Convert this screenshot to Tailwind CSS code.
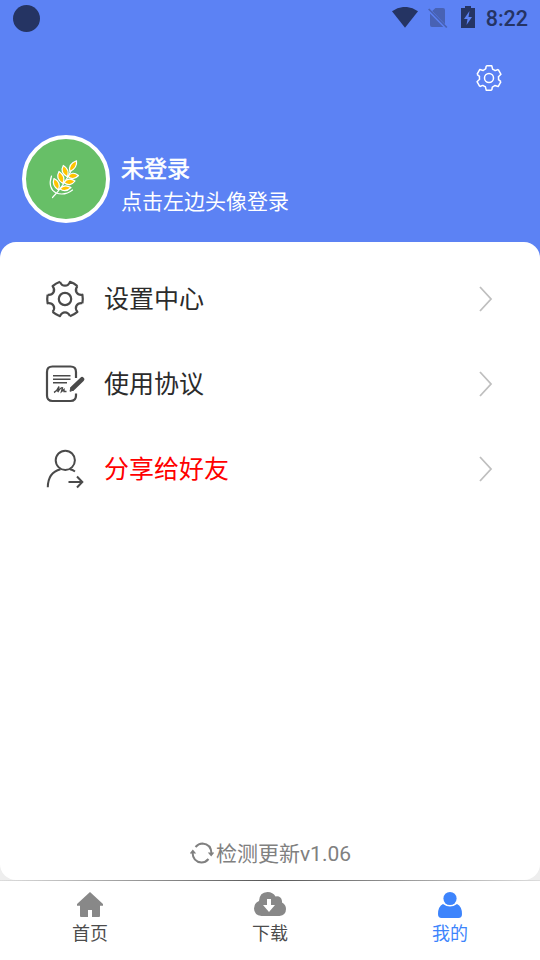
<!DOCTYPE html>
<html lang="zh-CN">
<head>
  <meta charset="UTF-8"/>
  <meta name="viewport" content="width=device-width, initial-scale=1.0"/>
  <title>我的</title>
  <script src="https://cdn.jsdelivr.net/npm/@tailwindcss/browser@4"></script>
</head>
<body class="bg-white font-['Roboto','Noto_Sans_CJK_SC',sans-serif]">
  <div class="w-[540px] h-[960px] flex flex-col overflow-hidden">
    <header class="h-[242px] shrink-0 bg-[#5c82f4] flex flex-col">
      <!-- Status bar -->
      <div class="h-9 flex items-center justify-between pl-[13px] pr-3">
        <div class="size-[27px] rounded-full bg-[#253463]"></div>
        <div class="flex items-center text-[#253463]">
          <svg class="w-[26px] h-[21px] mr-[10px] mb-0.5" viewBox="0 0 26 21" fill="currentColor"><path d="M0 4.3Q13-4.5 26 4.3L13 20.7z"/></svg>
          <svg class="w-5 h-[21px] mr-[13px]" viewBox="0 0 20 21"><path d="M7.5 0H15q2 0 2 2v14.2L4.2 3zM2 5.5 15.3 19H4q-2 0-2-2z" fill="#4862b4"/><path d="M.7 1 18.8 19.5" stroke="#4862b4" stroke-width="1.7"/></svg>
          <svg class="w-[14px] h-[22px] mr-[11px] mb-0.5" viewBox="0 0 14 22"><path d="M4 0h6v2h4v20H0V2h4z" fill="currentColor"/><path d="M8.5 5 3 13h3.5l-1 6L11 11H7.5z" fill="#5c82f4"/></svg>
          <span class="text-[21.5px] leading-9 pt-0.5 font-medium">8:22</span>
        </div>
      </div>
      <div class="h-[84px] flex justify-end items-center pr-[37px]">
        <svg class="size-7" viewBox="-14 -14 28 28" fill="none" stroke="white" stroke-width="1.5" stroke-linejoin="round">
          <defs><path id="cog" d="M-2.8-12.2H2.8L3.6-8.8Q5-8.3 6.2-7.4L9.17-8.52"/></defs>
          <use href="#cog"/><use href="#cog" transform="rotate(60)"/><use href="#cog" transform="rotate(120)"/>
          <use href="#cog" transform="rotate(180)"/><use href="#cog" transform="rotate(240)"/><use href="#cog" transform="rotate(300)"/>
          <circle r="4.5"/>
        </svg>
      </div>
      <!-- Profile -->
      <div class="flex items-center pl-[22px] mt-[15px]">
        <div class="size-[88px] rounded-full border-4 border-white bg-[#67bf67] flex items-center justify-center">
          <svg class="size-10" viewBox="0 0 40 40" fill="none" stroke="white" stroke-width="1.2" stroke-linecap="round">
            <path d="M6.5 38.5Q18 27 27 8M5.5 17Q1.5 29 10 34Q19 37 26.5 31"/>
            <g fill="#ffc400" stroke-linejoin="round">
              <path d="M23.8 12.5Q22 5 30.5 1.8Q31.5 9 23.8 12.5z"/>
              <path d="M21.5 18Q13.5 13.5 17.3 6.5Q24 10.5 21.5 18z"/>
              <path d="M22 17.5Q26 11.5 32.5 16.5Q27.5 22 22 17.5z"/>
              <path d="M17 24.5Q9 20 13 12.5Q20 17 17 24.5z"/>
              <path d="M18 23.5Q22 17.5 29 22Q24 28.5 18 23.5z"/>
              <path d="M12.5 31Q5.5 26.5 8 19.5Q15.5 23 12.5 31z"/>
              <path d="M14 30Q18 24.5 25 28.5Q19.5 34 14 30z"/>
            </g>
          </svg>
        </div>
        <div class="ml-[11px] mt-[10px] text-white">
          <div class="text-[23px] leading-[33px] [-webkit-text-stroke:0.6px_white] pt-[3px]">未登录</div>
          <div class="text-[21px] leading-[33px]">点击左边头像登录</div>
        </div>
      </div>
    </header>

    <main class="flex-1 bg-[linear-gradient(#5c82f4_50%,#eeeeee_50%)]">
      <div class="h-full rounded-2xl bg-white flex flex-col pt-[14px]">
        <a class="h-[85px] flex items-center pl-[45px] pr-[47px] text-[25px] text-[#2b2b2b]">
          <svg class="size-10" viewBox="-20 -20 40 40" fill="none" stroke="#4a4a4a" stroke-width="2.2" stroke-linejoin="round">
            <defs><path id="gear" d="M-5-17.2C-4-14.8-2.5-13.3 0-13.3S4-14.8 5-17.2Q9-15.8 12.4-12.93"/></defs>
            <use href="#gear"/><use href="#gear" transform="rotate(60)"/><use href="#gear" transform="rotate(120)"/>
            <use href="#gear" transform="rotate(180)"/><use href="#gear" transform="rotate(240)"/><use href="#gear" transform="rotate(300)"/>
            <circle r="6.2"/>
          </svg>
          <span class="ml-[19px] pt-[3px] flex-1">设置中心</span>
          <svg class="w-[14px] h-[26px]" viewBox="0 0 14 26" fill="none" stroke="#bfbfbf" stroke-width="1.8"><path d="M1 1 12 13 1 25"/></svg>
        </a>
        <a class="h-[85px] flex items-center pl-[45px] pr-[47px] text-[25px] text-[#2b2b2b]">
          <svg class="size-10" viewBox="0 0 40 40" fill="none" stroke="#4a4a4a" stroke-width="2.2">
            <path d="M31 14V8q0-5.5-5.5-5.500h-18Q2 2.5 2 8v23.5Q2 37 7.5 37h18q5.500 0 5.500-5.500V29.5"/>
            <path d="M8 11.8h17.500M8 15.3h17.500M8 18.8h14" stroke-width="1.5"/>
            <path d="M9 28.500Q12 27 14 22.500L12.800 28Q16 23 17.500 23.800L16.500 27.500 19 25.500 19 27.500H21.500" stroke-width="1.4"/>
            <path d="M28 24 37 15.3" stroke-width="4.600" stroke-linecap="round"/><path d="M25 27.300 26 23l3 3z" fill="#4a4a4a" stroke-width="1"/>
          </svg>
          <span class="ml-[19px] pt-[3px] flex-1">使用协议</span>
          <svg class="w-[14px] h-[26px]" viewBox="0 0 14 26" fill="none" stroke="#bfbfbf" stroke-width="1.8"><path d="M1 1 12 13 1 25"/></svg>
        </a>
        <a class="h-[85px] flex items-center pl-[45px] pr-[47px] text-[25px] text-[#ff0000]">
          <svg class="size-10" viewBox="0 0 40 40" fill="none" stroke="#4a4a4a" stroke-width="2">
            <circle cx="20.3" cy="11.3" r="9.6"/>
            <path d="M2.8 38.3Q3 23.5 15.5 20.3M25 20.3Q27.5 20.8 30 22.5M23.5 33H37M32 27.5 37.3 33 32 38.5"/>
          </svg>
          <span class="ml-[19px] pt-[3px] flex-1">分享给好友</span>
          <svg class="w-[14px] h-[26px]" viewBox="0 0 14 26" fill="none" stroke="#bfbfbf" stroke-width="1.8"><path d="M1 1 12 13 1 25"/></svg>
        </a>
        <div class="mt-auto mb-[11px] flex items-center justify-center pl-px text-[21px] leading-[30px] text-[#808080]">
          <svg class="w-6 h-6 mr-0.5 mb-0.5" viewBox="0 0 24 24" fill="none" stroke="#808080" stroke-width="2">
            <path d="M5.5 6Q8.5 2.5 12.5 2.5 21 3 21.5 12.5M18.5 18Q15.5 21.5 11.5 21.5 3 21 2.5 11.5"/>
            <path d="M17.8 11.5h6.7L21.2 15.5zM-.5 12.5h6.7L2.8 8.5z" fill="#808080" stroke="none"/>
          </svg>
          <span>检测更新v1.06</span>
        </div>
      </div>
    </main>

    <div class="h-px shrink-0 bg-[linear-gradient(90deg,#dddddd,#555555,#dddddd)]"></div>
    <nav class="h-[79px] shrink-0 grid grid-cols-3 bg-white text-[18px] leading-[26px] text-[#4c4c4c]">
      <a class="flex flex-col items-center pt-[10px]">
        <svg class="w-7 h-7" viewBox="0 1 28 28" fill="#888888"><path d="M14 2 27 14v1.800h-3V26q0 1-1 1h-7v-7h-4v7H5q-1 0-1-1V15.800H1V14z"/></svg>
        <span class="pt-0.5">首页</span>
      </a>
      <a class="flex flex-col items-center pt-[10px]">
        <svg class="w-8 h-7" viewBox="0 0 32 28"><path d="M7.500 25Q0 24 0 17.500 0 12 5 10 5.500 1.200 13.500 1q5.500 0 8 4.500 5.500-1 6.500 4.500v1.500q4 2 4 6.500 0 6-6.500 7z" fill="#888888"/><path d="M13 8h4v6h4l-6 7-6-7h4z" fill="white"/></svg>
        <span class="pt-0.5">下载</span>
      </a>
      <a class="flex flex-col items-center pt-[10px] text-[#3d84fc]">
        <svg class="w-6 h-7" viewBox="0 0 24 28" fill="currentColor"><circle cx="12" cy="7.5" r="6.6"/><path d="M5 13Q12 18.2 19 13 24 15.5 24 23q0 4-3.5 4h-17Q0 27 0 23 0 15.5 5 13z"/></svg>
        <span class="pt-0.5">我的</span>
      </a>
    </nav>
  </div>
</body>
</html>
